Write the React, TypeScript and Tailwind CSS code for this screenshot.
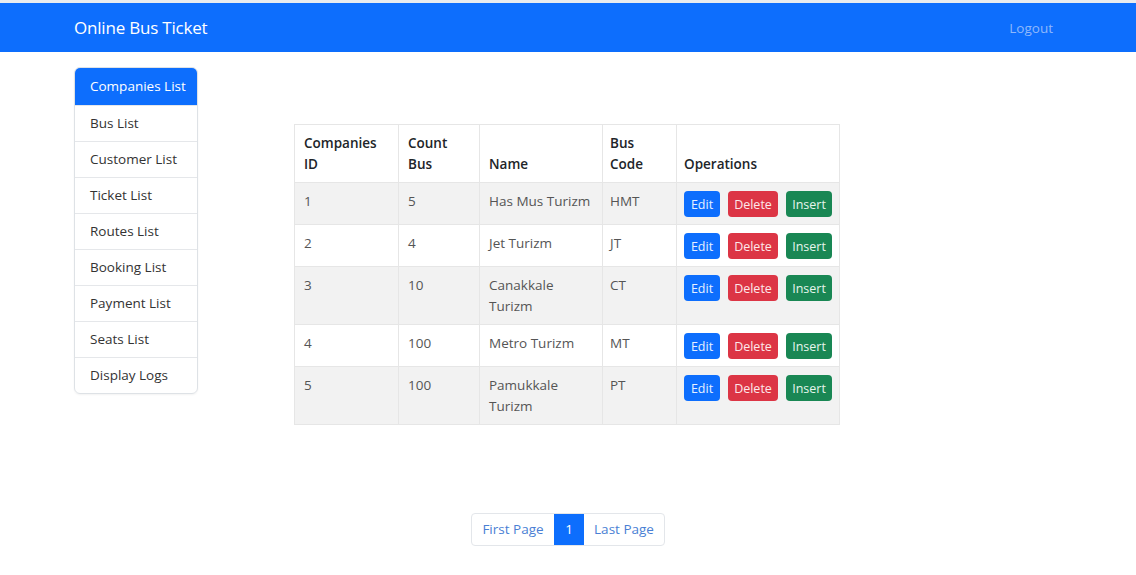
import React from "react";

const font = { fontFamily: '"Open Sans", "Noto Sans", sans-serif' };

const menu = [
  "Companies List",
  "Bus List",
  "Customer List",
  "Ticket List",
  "Routes List",
  "Booking List",
  "Payment List",
  "Seats List",
  "Display Logs",
];

const rows = [
  { id: "1", count: "5", name: "Has Mus Turizm", code: "HMT" },
  { id: "2", count: "4", name: "Jet Turizm", code: "JT" },
  { id: "3", count: "10", name: "Canakkale Turizm", code: "CT" },
  { id: "4", count: "100", name: "Metro Turizm", code: "MT" },
  { id: "5", count: "100", name: "Pamukkale Turizm", code: "PT" },
];

export default function App() {
  return (
    <div className="w-[1136px] h-[575px] bg-white overflow-hidden text-[#212529]" style={font}>
      <div className="h-[3px] bg-[#e9ecef]" />
      <nav className="h-[49px] bg-[#0d6efd] flex items-center justify-between pl-[74px] pr-[83px]">
        <span className="text-white text-[17px] tracking-[-0.2px]">Online Bus Ticket</span>
        <span className="text-[#8fb8fb] text-[13.5px] mt-[1px]">Logout</span>
      </nav>
      <div className="flex items-start pl-[74px] pt-[15px]">
        <div className="w-[124px] shrink-0 border border-[#dee2e6] rounded-[6px] overflow-hidden shadow-[0_1px_2px_rgba(0,0,0,0.05)]">
          {menu.map((m, i) => (
            <div
              key={m}
              className={
                i === 0
                  ? "h-[37px] flex items-center pl-[15px] bg-[#0d6efd] text-white text-[13.5px]"
                  : "h-[36px] flex items-center pl-[15px] border-t border-[#e5e7ea] text-[13.5px] text-[#333]"
              }
            >
              {m}
            </div>
          ))}
        </div>
        <div className="ml-[96px] mt-[57px]">
          <table className="border-collapse text-[13.5px] leading-[21px] w-[546px]">
            <thead>
              <tr>
                <th className="w-[104px] border border-[#e6e6e6] px-[9px] pt-[8px] pb-[7px] text-left align-bottom font-semibold">Companies<br />ID</th>
                <th className="w-[81px] border border-[#e6e6e6] px-[9px] pt-[8px] pb-[7px] text-left align-bottom font-semibold">Count<br />Bus</th>
                <th className="w-[123px] border border-[#e6e6e6] px-[9px] pt-[8px] pb-[7px] text-left align-bottom font-semibold">Name</th>
                <th className="w-[74px] border border-[#e6e6e6] px-[7px] pt-[8px] pb-[7px] text-left align-bottom font-semibold">Bus<br />Code</th>
                <th className="border border-[#e6e6e6] px-[7px] pt-[8px] pb-[7px] text-left align-bottom font-semibold">Operations</th>
              </tr>
            </thead>
            <tbody>
              {rows.map((r, i) => (
                <tr key={r.id} className={i % 2 === 0 ? "bg-[#f2f2f2]" : "bg-white"}>
                  <td className="border border-[#e6e6e6] px-[9px] pt-[8px] pb-[7px] align-top text-[#555]">{r.id}</td>
                  <td className="border border-[#e6e6e6] px-[9px] pt-[8px] pb-[7px] align-top text-[#555]">{r.count}</td>
                  <td className="border border-[#e6e6e6] px-[9px] pt-[8px] pb-[7px] align-top text-[#555]">
                    {r.name.length > 14 ? (
                      <>
                        {r.name.split(" ")[0]}
                        <br />
                        {r.name.split(" ")[1]}
                      </>
                    ) : (
                      r.name
                    )}
                  </td>
                  <td className="border border-[#e6e6e6] px-[7px] pt-[8px] pb-[7px] align-top text-[#555]">{r.code}</td>
                  <td className="border border-[#e6e6e6] px-[7px] pt-[8px] pb-[7px] align-top">
                    <div className="flex gap-[8px] h-[26px]">
                      <span className="w-[36px] h-[26px] flex items-center justify-center rounded-[4px] bg-[#0d6efd] text-[#e6f0ff] text-[12.5px]">Edit</span>
                      <span className="w-[50px] h-[26px] flex items-center justify-center rounded-[4px] bg-[#dc3545] text-[#fde8ea] text-[12.5px]">Delete</span>
                      <span className="w-[46px] h-[26px] flex items-center justify-center rounded-[4px] bg-[#198754] text-[#e6f5ec] text-[12.5px]">Insert</span>
                    </div>
                  </td>
                </tr>
              ))}
            </tbody>
          </table>
        </div>
      </div>
      <div className="flex justify-center mt-[88px]">
        <div className="flex h-[33px] border border-[#e3e6ea] rounded-[4px] text-[13.5px] text-[#4a7fd4]">
          <span className="w-[82px] flex items-center justify-center">First Page</span>
          <span className="w-[30px] flex items-center justify-center bg-[#0d6efd] text-white">1</span>
          <span className="w-[80px] flex items-center justify-center">Last Page</span>
        </div>
      </div>
    </div>
  );
}
